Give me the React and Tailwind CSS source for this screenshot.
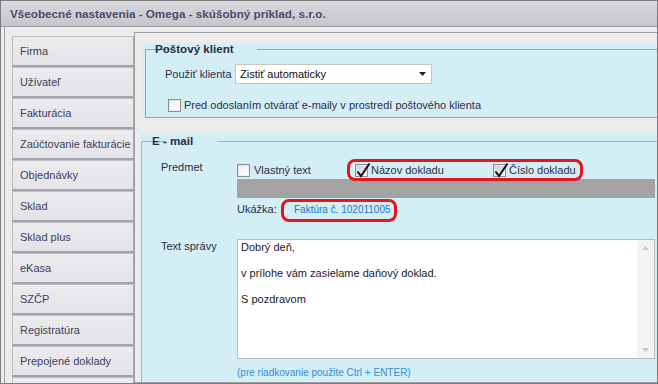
import React from "react";

const tabs = [
  "Firma",
  "Užívateľ",
  "Fakturácia",
  "Zaúčtovanie fakturácie",
  "Objednávky",
  "Sklad",
  "Sklad plus",
  "eKasa",
  "SZČP",
  "Registratúra",
  "Prepojené doklady",
  "",
];

const Checkbox = ({ checked }) => (
  <span className="relative inline-block w-[13px] h-[13px] shrink-0 border border-[#8e8f93] bg-gradient-to-br from-[#dcdce2] to-[#f8f8fa]">
    <span className={`absolute inset-[1px] bg-gradient-to-br ${checked ? "from-[#d4d4dc] to-[#ececf0]" : "from-[#eeeef2] to-white"}`} />
    {checked && (
      <svg className="absolute left-[-1px] top-[-3px] overflow-visible" width="16" height="16" viewBox="0 0 16 16">
        <path d="M2.5 9.5 L6 14 L14.5 1.5" fill="none" stroke="#111" strokeWidth="2" />
      </svg>
    )}
  </span>
);

const App = () => {
  return (
    <div className="w-[658px] h-[384px] overflow-hidden flex flex-col border border-[#7c7c80] bg-[#ebebeb] font-['Liberation_Sans',Arial,sans-serif] text-[11px] text-[#2d2d4b]">
      {/* title bar */}
      <div className="h-[26px] shrink-0 flex items-center pl-[9px] border-b border-[#9c9ca4] bg-gradient-to-b from-[#d9d9de] to-[#c5c5cb] text-[11.7px] font-bold text-[#4d4d68]">
        Všeobecné nastavenia - Omega - skúšobný príklad, s.r.o.
      </div>

      <div className="flex flex-1 min-h-0">
        {/* left tabs */}
        <div className="w-[133px] shrink-0 pl-[3px]">
          <div className="h-full border-l border-[#a4a4a8] pl-[7px] pt-[9px] overflow-hidden">
            {tabs.map((t, i) => (
              <div
                key={i}
                className="h-[31px] flex items-center pl-[7px] overflow-hidden border border-[#bdbdc4] border-b-2 border-b-[#a3a3ab] border-r-[#a6a6ae] bg-gradient-to-b from-[#ececef] to-[#e3e3e8] text-[#3e3e5c] whitespace-nowrap"
              >
                {t}
              </div>
            ))}
          </div>
        </div>

        {/* content panel */}
        <div className="flex-1 min-w-0 mt-[5px] flex flex-col border-l border-t border-b border-[#a0a0a4] bg-[#ececec]">
          {/* Poštový klient */}
          <div className="ml-[8px] mt-[10px] h-[75px] shrink-0 pl-[2px] bg-[#d3eef5]">
            <fieldset className="h-full border-t border-l border-b border-[#5fb7d0] rounded-tl-[2px] pl-[19px]">
              <legend className="ml-[5px] -translate-x-[19px] px-[4px] leading-[12px] text-[11.6px] font-bold text-[#2b2b48]">
                Poštový klient
              </legend>
              <div className="mt-[9px] flex items-center">
                <span className="w-[70px]">Použiť klienta</span>
                <div className="w-[197px] h-[20px] flex items-center justify-between pl-[4px] pr-[5px] border border-[#c6c6c6] bg-white text-[#111]">
                  <span>Zistiť automaticky</span>
                  <svg width="7" height="4" viewBox="0 0 7 4">
                    <path d="M0 0 H7 L3.5 4 Z" fill="#222" />
                  </svg>
                </div>
              </div>
              <div className="mt-[13px] ml-[3px] flex items-center gap-[3px]">
                <Checkbox />
                <span>Pred odoslaním otvárať e-maily v prostredí poštového klienta</span>
              </div>
            </fieldset>
          </div>

          {/* E - mail */}
          <div className="ml-[6px] mt-[15px] flex-1 min-h-0 pt-[2px] bg-[#d3eef5]">
            <fieldset className="h-full border-t border-l border-[#77c2d8] rounded-tl-[2px] pl-[19px] pr-[2px]">
              <legend className="ml-[5px] -translate-x-[19px] px-[5px] leading-[12px] text-[11.6px] font-bold text-[#2b2b48]">
                E - mail
              </legend>

              <div className="mt-[14px] flex">
                <div className="w-[76px] shrink-0 leading-[13px]">Predmet</div>
                <div className="flex-1 min-w-0">
                  <div className="relative mt-[3px] h-[13px] flex items-center">
                    <span className="w-[118px] flex items-center">
                      <Checkbox />
                      <span className="ml-[4px] leading-[13px]">Vlastný text</span>
                    </span>
                    <span className="w-[138px] flex items-center">
                      <Checkbox checked />
                      <span className="ml-[3px] leading-[13px]">Názov dokladu</span>
                    </span>
                    <span className="flex items-center">
                      <Checkbox checked />
                      <span className="ml-[3px] leading-[13px]">Číslo dokladu</span>
                    </span>
                    <span className="absolute left-[110px] top-[-5px] w-[236px] h-[22px] border-[3px] border-[#e5141d] rounded-[8px] z-10" />
                  </div>
                  <div className="mt-[2px] h-[19px] bg-[#a3a3a3]" />
                </div>
              </div>

              <div className="relative mt-[5px] ml-[76px] flex items-center leading-[13px]">
                <span className="w-[57px]">Ukážka:</span>
                <span className="text-[10px] text-[#2177c9]">Faktúra č. 102011005</span>
                <span className="absolute left-[44px] top-[-4px] w-[116px] h-[23px] border-[3px] border-[#e5141d] rounded-[8px]" />
              </div>

              <div className="mt-[23px] flex">
                <div className="w-[76px] shrink-0 pt-[1px] leading-[13px]">Text správy</div>
                <div className="flex-1 min-w-0 h-[120px] flex border border-[#bcbcc0] bg-white">
                  <div className="flex-1 pl-[3px] pt-[1px] leading-[13px] text-[#1a1a28] whitespace-pre-line">
                    {"Dobrý deň,\n\nv prílohe vám zasielame daňový doklad.\n\nS pozdravom"}
                  </div>
                  <div className="w-[17px] flex flex-col items-center justify-between py-[6px] bg-[#f3f3f3]">
                    <svg width="7" height="4" viewBox="0 0 7 4">
                      <path d="M0 4 H7 L3.5 0 Z" fill="#c6c6ca" />
                    </svg>
                    <svg width="7" height="4" viewBox="0 0 7 4">
                      <path d="M0 0 H7 L3.5 4 Z" fill="#c6c6ca" />
                    </svg>
                  </div>
                </div>
              </div>

              <div className="mt-[7px] ml-[76px] leading-[13px] text-[10px] text-[#3a8bd6]">
                (pre riadkovanie použite Ctrl + ENTER)
              </div>
            </fieldset>
          </div>
        </div>
      </div>
    </div>
  );
};

export default App;
